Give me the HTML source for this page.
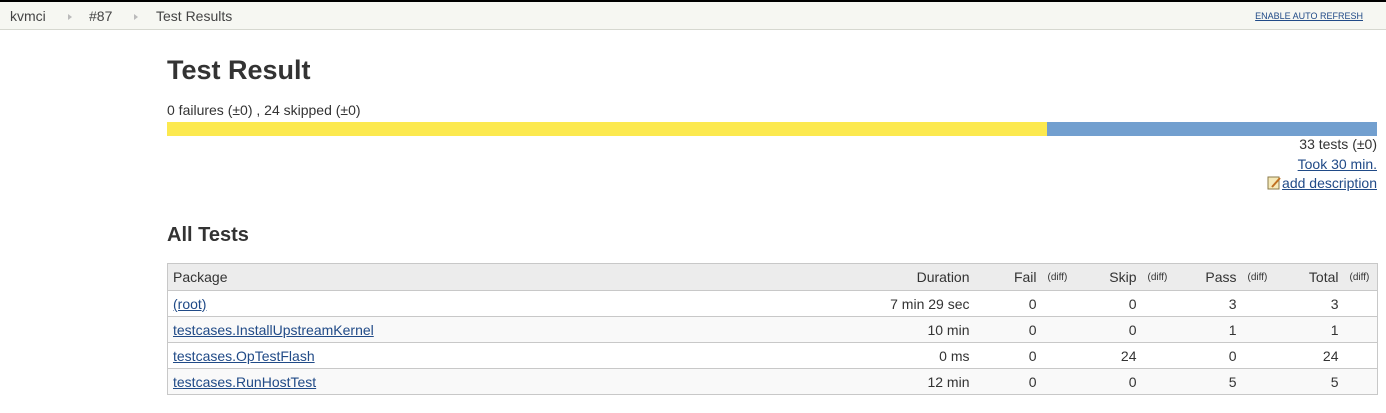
<!DOCTYPE html>
<html><head><meta charset="utf-8"><style>
*{margin:0;padding:0;box-sizing:border-box}
body{width:1386px;height:413px;background:#fff;font-family:"Liberation Sans",sans-serif;color:#333;font-size:14px;position:relative;overflow:hidden}
a{color:#204a87;text-decoration:underline}
.top{position:absolute;left:0;top:0;width:1386px;height:2px;background:#000}
.bc{position:absolute;left:0;top:2px;width:1386px;height:28px;background:#f6f7f2;border-bottom:1px solid #d6d8d0;font-size:14px;color:#444}
.bc span{position:absolute;top:6px}
.arr{width:0;height:0;border-left:4px solid #bbb;border-top:3px solid transparent;border-bottom:3px solid transparent;position:absolute;top:12px}
.ar{position:absolute;right:23px;top:9px;font-size:9px;color:#204a87;text-decoration:underline}
h1{position:absolute;left:167px;top:55px;font-size:27px;font-weight:bold;color:#333}
.sum{position:absolute;left:167px;top:102px;font-size:14px}
.bar{position:absolute;left:167px;top:122px;width:1210px;height:14px;background:#729fcf}
.bar div{width:880px;height:14px;background:#fce94f}
.r{position:absolute;right:9px;font-size:14px;text-align:right}
h2{position:absolute;left:167px;top:224px;font-size:20px;font-weight:bold;color:#333}
table{position:absolute;left:167px;top:263px;width:1210px;border-collapse:collapse;border:1px solid #c8c8c8;font-size:14px;table-layout:fixed}
th{background:#ececec;font-weight:normal;height:27px;text-align:right;padding-right:6px;color:#333}
td{height:26px;border-top:1px solid #c8c8c8;text-align:right;padding-right:6px;padding-top:0;padding-bottom:0}
tr.g td{background:#f9f9f9}
.l{text-align:left;padding-left:5px}
.d{font-size:10px;text-align:left;padding-left:5px;vertical-align:middle}
</style></head><body>
<div class="top"></div>
<div class="bc">
<span style="left:10px">kvmci</span><i class="arr" style="left:68px"></i>
<span style="left:89px">#87</span><i class="arr" style="left:134px"></i>
<span style="left:156px">Test Results</span>
<a class="ar">ENABLE AUTO REFRESH</a>
</div>
<h1>Test Result</h1>
<div class="sum">0 failures (±0) , 24 skipped (±0)</div>
<div class="bar"><div></div></div>
<div class="r" style="top:136px">33 tests (±0)</div>
<div class="r" style="top:156px"><a>Took 30 min.</a></div>
<div class="r" style="top:175px"><svg width="15" height="15" style="vertical-align:-2px"><rect x="1" y="2" width="11" height="12" fill="#f5e9b8" stroke="#8a7a4a"/><path d="M5 12 L13 3" stroke="#c07020" stroke-width="2"/></svg><a>add description</a></div>
<h2>All Tests</h2>
<table>
<colgroup><col style="width:713px"><col style="width:95px"><col style="width:67px"><col style="width:33px"><col style="width:67px"><col style="width:33px"><col style="width:67px"><col style="width:33px"><col style="width:69px"><col style="width:33px"></colgroup>
<tr><th class="l">Package</th><th>Duration</th><th>Fail</th><th class="d">(diff)</th><th>Skip</th><th class="d">(diff)</th><th>Pass</th><th class="d">(diff)</th><th>Total</th><th class="d">(diff)</th></tr>
<tr><td class="l"><a>(root)</a></td><td>7 min 29 sec</td><td>0</td><td></td><td>0</td><td></td><td>3</td><td></td><td>3</td><td></td></tr>
<tr class="g"><td class="l"><a>testcases.InstallUpstreamKernel</a></td><td>10 min</td><td>0</td><td></td><td>0</td><td></td><td>1</td><td></td><td>1</td><td></td></tr>
<tr><td class="l"><a>testcases.OpTestFlash</a></td><td>0 ms</td><td>0</td><td></td><td>24</td><td></td><td>0</td><td></td><td>24</td><td></td></tr>
<tr class="g"><td class="l"><a>testcases.RunHostTest</a></td><td>12 min</td><td>0</td><td></td><td>0</td><td></td><td>5</td><td></td><td>5</td><td></td></tr>
</table>
</body></html>
